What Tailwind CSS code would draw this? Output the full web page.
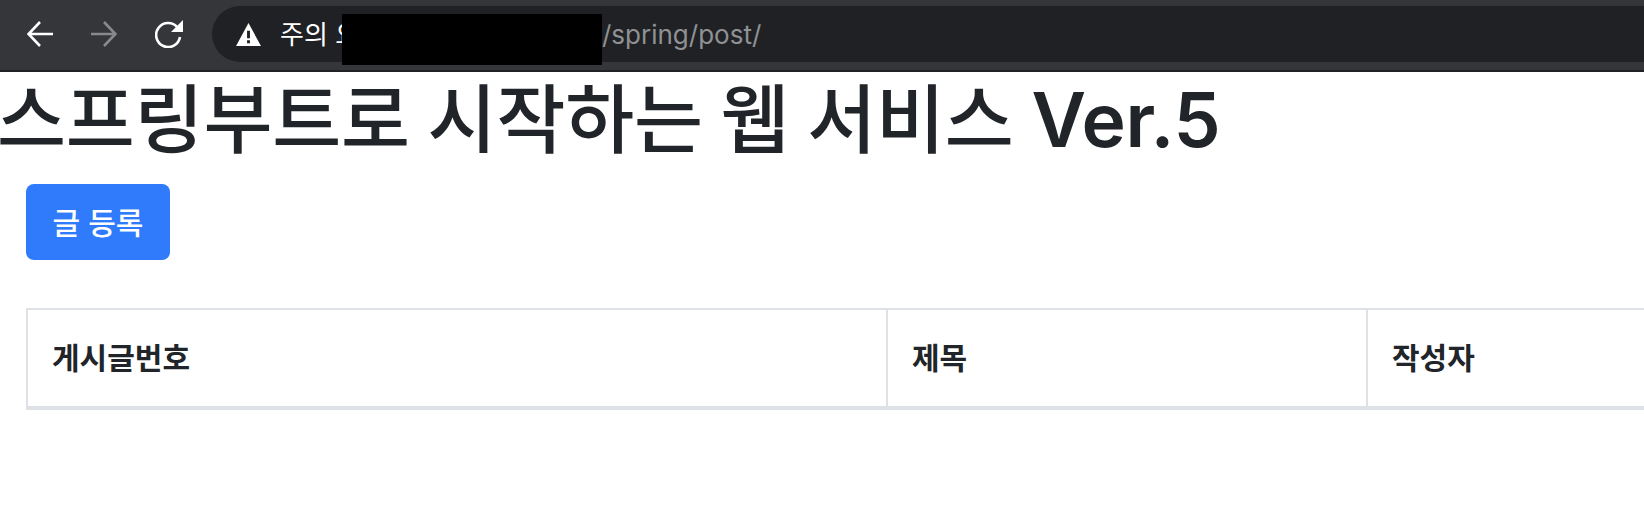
<!DOCTYPE html>
<html lang="ko">
<head>
    <meta charset="UTF-8">
    <title>스프링부트로 시작하는 웹 서비스</title>
    <script src="https://cdn.jsdelivr.net/npm/@tailwindcss/browser@4"></script>
</head>
<body class="bg-white overflow-hidden font-['Inter','Noto_Sans_CJK_KR',sans-serif]">
    <!-- Browser toolbar -->
    <div class="relative h-[72px] bg-[#35363a] border-b-2 border-[#202124] pt-[6px] flex items-start overflow-hidden">
        <div class="w-[212px] h-[56px] flex items-center pl-[27px] gap-[38px] shrink-0">
            <svg class="w-[26px] h-[26px]" viewBox="0 0 26 26" fill="none" stroke="#fff" stroke-width="2.6"><path d="M26 13H2M13 1 1.500 13 13 25"/></svg>
            <svg class="w-[26px] h-[26px]" viewBox="0 0 26 26" fill="none" stroke="#88898b" stroke-width="2.6"><path d="M0 13h24M13 1l11.500 12L13 25"/></svg>
            <svg class="w-[28px] h-[28px]" viewBox="0 0 28 28" fill="none"><path d="M22.500 7.500A12 12 0 1 0 25 17" stroke="#fff" stroke-width="2.600"/><path d="M28 0v12H16z" fill="#fff"/></svg>
        </div>
        <div class="flex-1 h-[56px] bg-[#202124] rounded-l-[28px] flex items-center pl-[24px] text-[26px] text-white">
            <svg class="w-[25px] h-[23px] shrink-0" viewBox="0 0 26 24"><path fill-rule="evenodd" fill="#fff" d="M13 0l13 24H0zM11.500 8v8h3V8zM11.500 18v3h3v-3z"/></svg>
            <span class="ml-[19px]">주의 요함</span>
            <span class="ml-[219px] text-[#8f9194]">/spring/post/</span>
        </div>
        <div class="absolute left-[342px] top-[14px] w-[260px] h-[51px] bg-black"></div>
    </div>

    <!-- Main -->
    <main>
        <h1 class="-ml-[3px] mt-[8px] text-[75px] leading-[80px] font-medium tracking-[-0.2px] [word-spacing:-2px] text-[#212529] whitespace-nowrap">스프링부트로 시작하는 웹 서비스 <span class="font-semibold">Ver.5</span></h1>
        <div class="pl-[26px] pt-[24px]">
            <button class="w-[144px] h-[76px] pt-[3px] bg-[#307bfb] rounded-[8px] text-white text-[30px] font-medium">글 등록</button>
        </div>
        <table class="ml-[26px] mt-[48px] w-[1700px] table-fixed border-collapse text-[#212529] text-[30px] font-bold">
            <thead>
                <tr class="h-[99px]">
                    <th class="w-[860px] text-left pl-[24px] border-2 border-[#dee2e6] border-b-4">게시글번호</th>
                    <th class="w-[480px] text-left pl-[24px] border-2 border-[#dee2e6] border-b-4">제목</th>
                    <th class="text-left pl-[24px] border-2 border-[#dee2e6] border-b-4">작성자</th>
                </tr>
            </thead>
        </table>
    </main>
</body>
</html>
